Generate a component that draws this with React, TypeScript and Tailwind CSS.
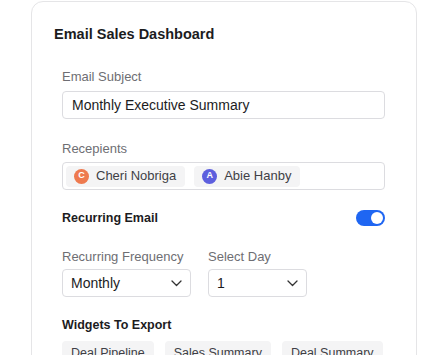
import React from "react";

function Chevron() {
  return (
    <svg width="11" height="7" viewBox="0 0 11 7" fill="none">
      <path d="M1 1l4.5 4.5L10 1" stroke="#333" strokeWidth="1.3" strokeLinecap="round" strokeLinejoin="round" />
    </svg>
  );
}

function Person({ letter, name, color }: { letter: string; name: string; color: string }) {
  return (
    <div className="flex h-[21px] shrink-0 items-center gap-[7px] rounded-[4px] bg-[#f4f4f5] pl-[8px] pr-[9px]">
      <div
        className={`flex h-[15px] w-[15px] items-center justify-center rounded-full text-[9px] font-bold text-white ${color}`}
      >
        {letter}
      </div>
      <span className="whitespace-nowrap text-[13px] text-[#3f3f46]">{name}</span>
    </div>
  );
}

export default function App() {
  return (
    <div className="h-[355px] overflow-hidden bg-white pt-px" style={{ fontFamily: "'Liberation Sans', Arial, sans-serif" }}>
      <div className="ml-[31px] w-[386px] rounded-[12px] border border-[#e5e5e7] px-[22px] pt-[22px] pb-6 text-[#1c1c1e]">
        <div className="text-[14.5px] font-bold leading-5">Email Sales Dashboard</div>
        <div className="pl-2">
          <div className="mt-[23px] text-[13px] leading-5 text-[#6e6e73]">Email Subject</div>
          <div className="mt-[4px] flex h-[28px] w-[323px] items-center rounded-[4px] border border-[#dcdce0] px-[9px] text-[14px] text-[#1c1c1e]">
            Monthly Executive Summary
          </div>

          <div className="mt-[20px] text-[13px] leading-5 text-[#6e6e73]">Recepients</div>
          <div className="mt-[3px] flex h-[28px] w-[323px] items-center gap-[9px] rounded-[4px] border border-[#dcdce0] px-[3px]">
            <Person letter="C" name="Cheri Nobriga" color="bg-[#ee7a4f]" />
            <Person letter="A" name="Abie Hanby" color="bg-[#5d5fde]" />
          </div>

          <div className="mt-[18px] flex h-5 w-[323px] items-center justify-between">
            <span className="text-[12.5px] font-bold">Recurring Email</span>
            <div className="flex h-[16px] w-[29px] items-center justify-end rounded-full bg-[#1f66f2] pr-[2px]">
              <div className="h-[12px] w-[12px] rounded-full bg-white" />
            </div>
          </div>

          <div className="mt-[19px] flex gap-[17px]">
            <div>
              <div className="text-[13px] leading-5 text-[#6e6e73]">Recurring Frequency</div>
              <div className="mt-[2px] flex h-[28px] w-[129px] items-center justify-between rounded-[4px] border border-[#dcdce0] pl-[8px] pr-[8px] text-[14px]">
                <span>Monthly</span>
                <Chevron />
              </div>
            </div>
            <div>
              <div className="text-[13px] leading-5 text-[#6e6e73]">Select Day</div>
              <div className="mt-[2px] flex h-[28px] w-[99px] items-center justify-between rounded-[4px] border border-[#dcdce0] pl-[8px] pr-[8px] text-[14px]">
                <span>1</span>
                <Chevron />
              </div>
            </div>
          </div>

          <div className="mt-[18px] text-[12.5px] font-bold leading-5">Widgets To Export</div>
          <div className="mt-[6px] flex gap-[11px]">
            {["Deal Pipeline", "Sales Summary", "Deal Summary"].map((w) => (
              <div key={w} className="flex h-[24px] shrink-0 items-center whitespace-nowrap rounded-[4px] bg-[#f4f4f5] px-[9px] text-[12.5px] text-[#3f3f46]">
                {w}
              </div>
            ))}
          </div>
        </div>
      </div>
    </div>
  );
}
